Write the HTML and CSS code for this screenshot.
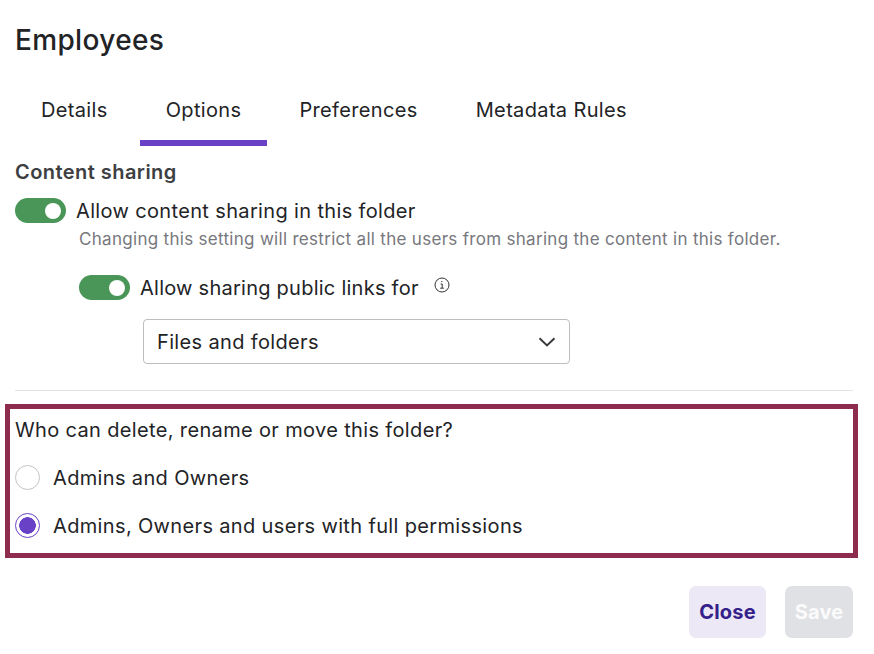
FILE: index.html
```html
<!DOCTYPE html>
<html lang="en">
<head>
  <meta charset="UTF-8">
  <title>Employees</title>
  <link rel="stylesheet" href="styles.css">
</head>
<body>

<div class="dialog">
  <h1 class="title">Employees</h1>

  <div class="tabs">
    <div class="tab">Details</div>
    <div class="tab active">Options</div>
    <div class="tab">Preferences</div>
    <div class="tab">Metadata Rules</div>
  </div>

  <h2 class="section-title">Content sharing</h2>

  <div class="toggle-row">
    <span class="toggle"></span>
    <span class="toggle-label">Allow content sharing in this folder</span>
  </div>
  <p class="hint">Changing this setting will restrict all the users from sharing the content in this folder.</p>

  <div class="toggle-row nested">
    <span class="toggle"></span>
    <span class="toggle-label">Allow sharing public links for</span>
    <svg class="info" width="16" height="16" viewBox="0 0 16 16" fill="none" stroke="#333" stroke-width="1">
      <circle cx="8" cy="8" r="7"/>
      <path d="M6.6 7h1.6v4M6.2 11.2h3.6"/>
      <path d="M7.2 4.6h1.2"/>
    </svg>
  </div>

  <div class="select">
    <span>Files and folders</span>
    <svg width="18" height="10" viewBox="0 0 18 10" fill="none" stroke="#3a3a3f" stroke-width="2">
      <path d="M1.5 1.2 9 8.4l7.5-7.2"/>
    </svg>
  </div>

  <hr class="divider">

  <div class="highlight">
    <div class="question">Who can delete, rename or move this folder?</div>
    <div class="radio-row">
      <span class="radio"></span>
      <span class="radio-label">Admins and Owners</span>
    </div>
    <div class="radio-row">
      <span class="radio checked"></span>
      <span class="radio-label">Admins, Owners and users with full permissions</span>
    </div>
  </div>

  <div class="actions">
    <button class="btn btn-close">Close</button>
    <button class="btn btn-save" disabled>Save</button>
  </div>
</div>

</body>
</html>
```

FILE: styles.css
```css
body {
  margin: 0;
  background: #fff;
  font-family: Inter, "Liberation Sans", sans-serif;
  color: #222326;
  letter-spacing: 0.35px;
}

.dialog {
  width: 874px;
  height: 654px;
  padding: 0 21px 0 15px;
  box-sizing: border-box;
  overflow: hidden;
}

.title {
  margin: 0;
  padding-top: 22px;
  font-size: 28px;
  line-height: 36px;
  font-weight: 500;
}

.tabs {
  display: flex;
  gap: 6px;
  margin-top: 23px;
}

.tab {
  padding: 14px 26px 0;
  height: 65px;
  box-sizing: border-box;
  line-height: 30px;
  font-size: 20px;
}

.tab.active {
  border-bottom: 6px solid #6941c6;
}

.section-title {
  margin: 12px 0 0;
  font-size: 20px;
  line-height: 28px;
  font-weight: 600;
  color: #3d3e42;
  letter-spacing: 0.45px;
}

.toggle-row {
  display: flex;
  align-items: center;
  gap: 10px;
  margin-top: 11px;
  height: 26px;
}

.toggle-row.nested {
  margin: 24px 0 0 64px;
  letter-spacing: 0.25px;
}

.toggle {
  position: relative;
  width: 51px;
  height: 25px;
  border-radius: 13px;
  background: #4a9558;
  flex: none;
}

.toggle::after {
  content: "";
  position: absolute;
  right: 5px;
  top: 5px;
  width: 16px;
  height: 16px;
  border-radius: 50%;
  background: #fff;
}

.toggle-label {
  font-size: 20px;
  padding-top: 1px;
}

.info {
  margin: 0 0 5px 5px;
}

.hint {
  margin: 5px 0 0 64px;
  font-size: 17px;
  line-height: 22px;
  color: #77787d;
  letter-spacing: 0.3px;
}

.select {
  display: flex;
  align-items: center;
  justify-content: space-between;
  width: 427px;
  height: 45px;
  margin: 19px 0 0 128px;
  padding: 0 13px;
  box-sizing: border-box;
  border: 1px solid #bdbdc0;
  border-radius: 4px;
  font-size: 20px;
}

.divider {
  margin: 26px 0 0;
  border: none;
  border-top: 1px solid #e3e3e5;
}

.highlight {
  margin: 13px -5px 0 -10px;
  height: 154px;
  padding: 6px 0 0 5px;
  box-sizing: border-box;
  border: 5px solid #8e2c4f;
  font-size: 20px;
}

.question {
  line-height: 30px;
}

.radio-row {
  display: flex;
  align-items: center;
  gap: 13px;
  height: 26px;
  margin-top: 22px;
}

.question + .radio-row {
  margin-top: 19px;
}

.radio {
  width: 25px;
  height: 25px;
  box-sizing: border-box;
  border: 1px solid #c4c4c6;
  border-radius: 50%;
  flex: none;
}

.radio.checked {
  border-color: #6941c6;
  background: radial-gradient(circle, #6941c6 8px, #fff 8.6px);
}

.radio-label {
  padding-top: 2px;
}

.actions {
  display: flex;
  justify-content: flex-end;
  gap: 19px;
  margin-top: 28px;
}

.btn {
  height: 52px;
  border: none;
  border-radius: 7px;
  font-family: inherit;
  font-size: 20px;
  font-weight: 700;
  padding: 0;
  letter-spacing: 0.2px;
}

.btn-close {
  width: 77px;
  background: #ece8f6;
  color: #35218a;
}

.btn-save {
  width: 68px;
  background: #e0e1e4;
  color: #fbfbfc;
}
```
